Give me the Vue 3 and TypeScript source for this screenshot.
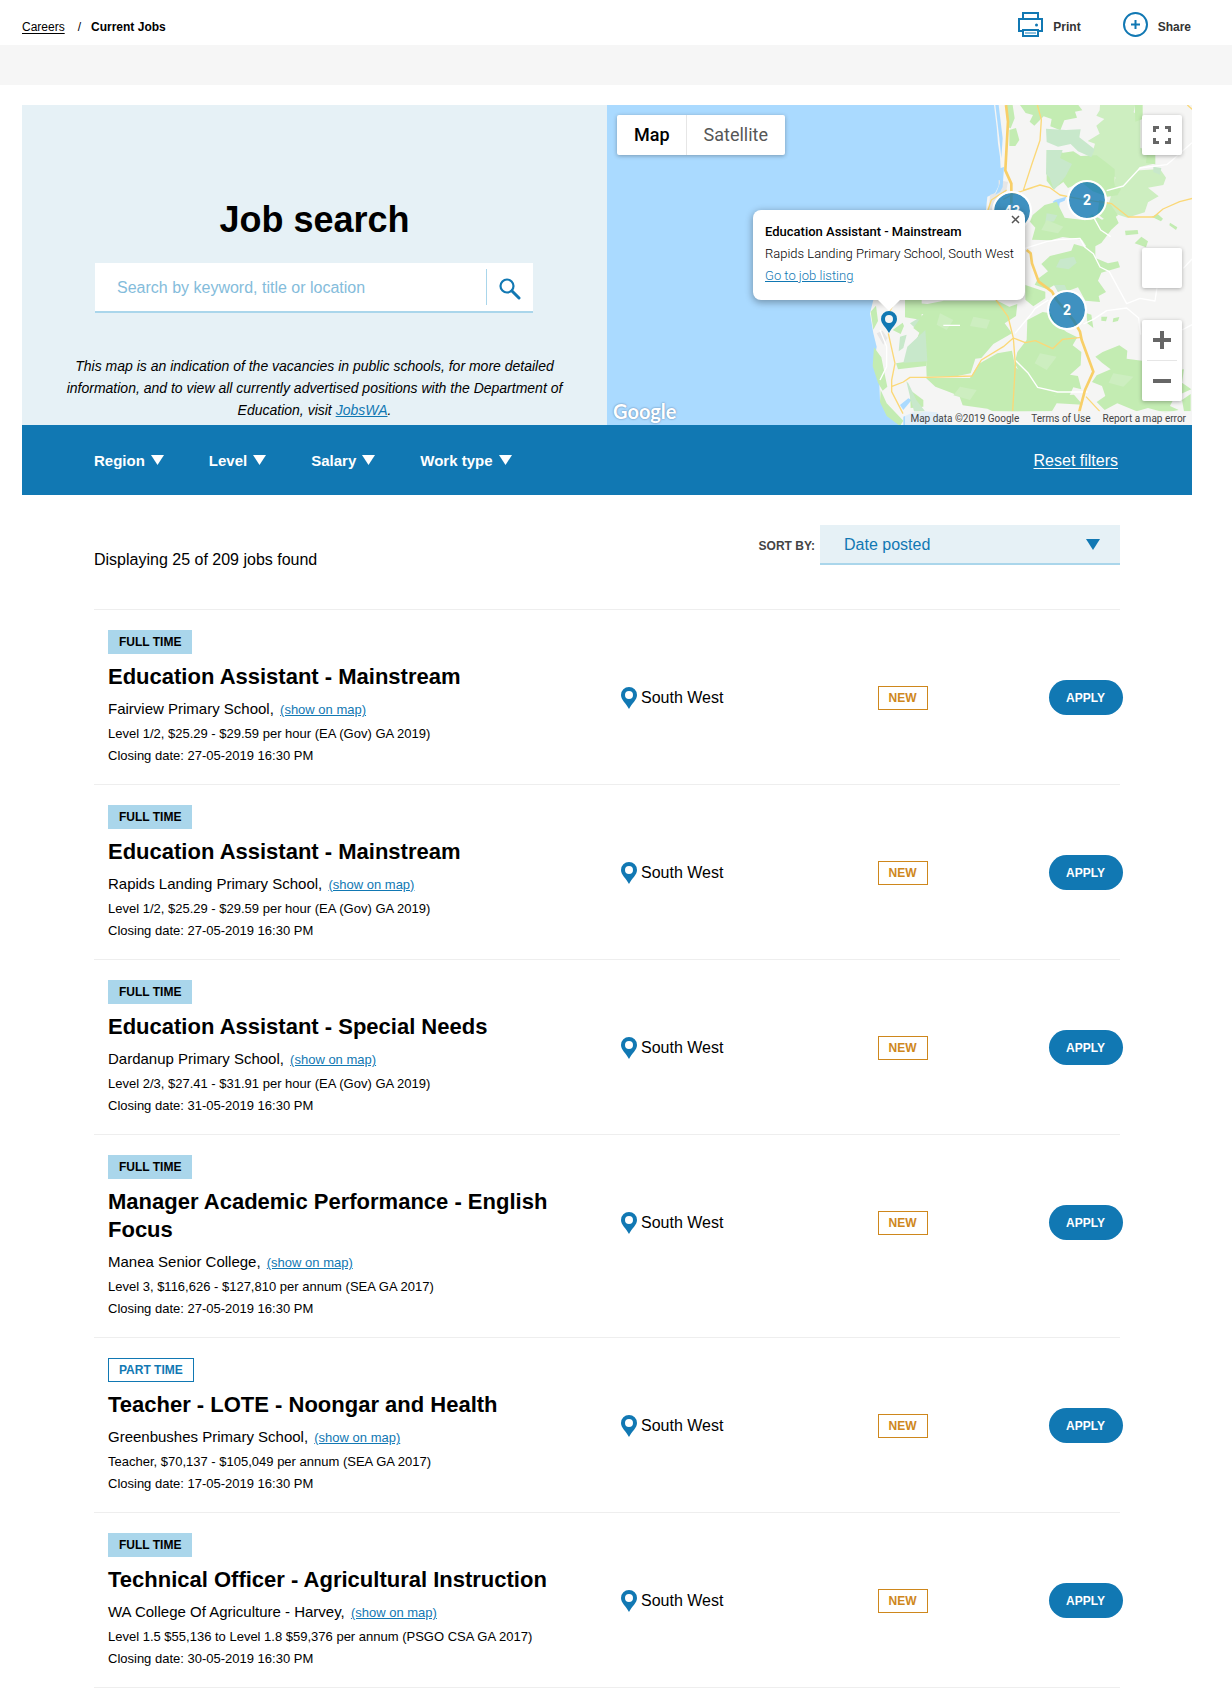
<script setup lang="ts">
import { ref } from 'vue'

interface Job {
  type: 'Full time' | 'Part time'
  title: string
  school: string
  salary: string
  closing: string
}

const filters: string[] = ['Region', 'Level', 'Salary', 'Work type']
const keyword = ref('')
const sort = ref('Date posted')

const jobs: Job[] = [
  { type: 'Full time', title: 'Education Assistant - Mainstream', school: 'Fairview Primary School,', salary: 'Level 1/2, $25.29 - $29.59 per hour (EA (Gov) GA 2019)', closing: '27-05-2019 16:30 PM' },
  { type: 'Full time', title: 'Education Assistant - Mainstream', school: 'Rapids Landing Primary School,', salary: 'Level 1/2, $25.29 - $29.59 per hour (EA (Gov) GA 2019)', closing: '27-05-2019 16:30 PM' },
  { type: 'Full time', title: 'Education Assistant - Special Needs', school: 'Dardanup Primary School,', salary: 'Level 2/3, $27.41 - $31.91 per hour (EA (Gov) GA 2019)', closing: '31-05-2019 16:30 PM' },
  { type: 'Full time', title: 'Manager Academic Performance - English Focus', school: 'Manea Senior College,', salary: 'Level 3, $116,626 - $127,810 per annum (SEA GA 2017)', closing: '27-05-2019 16:30 PM' },
  { type: 'Part time', title: 'Teacher - LOTE - Noongar and Health', school: 'Greenbushes Primary School,', salary: 'Teacher, $70,137 - $105,049 per annum (SEA GA 2017)', closing: '17-05-2019 16:30 PM' },
  { type: 'Full time', title: 'Technical Officer - Agricultural Instruction', school: 'WA College Of Agriculture - Harvey,', salary: 'Level 1.5 $55,136 to Level 1.8 $59,376 per annum (PSGO CSA GA 2017)', closing: '30-05-2019 16:30 PM' },
]
</script>

<template>
  <div class="page">
    <header class="top">
      <nav class="crumbs" aria-label="Breadcrumb">
        <a href="#careers">Careers</a><span class="slash">/</span><strong>Current Jobs</strong>
      </nav>
      <div class="tools">
        <button type="button" class="tool">
          <svg width="25" height="25" viewBox="0 0 25 25" fill="none" stroke="#1178b3" stroke-width="2">
            <path d="M5 6V1h15v5M5 19H1V7h23v12h-4" />
            <path d="M5 18h15v6H5z" />
            <path d="M7 21h11" stroke="#8fc1dd" />
            <circle cx="18.500" cy="13" r="1.500" fill="#1178b3" stroke="none" />
          </svg>
          <span>Print</span>
        </button>
        <button type="button" class="tool">
          <svg width="25" height="25" viewBox="0 0 25 25" fill="none" stroke="#1178b3" stroke-width="2">
            <circle cx="12.500" cy="12.500" r="11.500" />
            <path d="M12.500 8v9M8 12.500h9" />
          </svg>
          <span>Share</span>
        </button>
      </div>
    </header>
    <div class="band"></div>

    <main class="main">
      <div class="hero">
        <section class="search">
          <h1>Job search</h1>
          <form class="searchbox" @submit.prevent>
            <input v-model="keyword" type="text" aria-label="Search jobs" placeholder="Search by keyword, title or location" />
            <button type="submit" aria-label="Search">
              <svg width="22" height="22" viewBox="0 0 22 22" fill="none" stroke="#1178b3">
                <circle cx="8" cy="8" r="6.500" stroke-width="2.200" />
                <path d="M13 13l7 7" stroke-width="3" stroke-linecap="round" />
              </svg>
            </button>
          </form>
          <p>This map is an indication of the vacancies in public schools, for more detailed information, and to view all currently advertised positions with the Department of Education, visit <a href="#jobswa">JobsWA</a>.</p>
        </section>

        <section class="map" aria-label="Map of vacancies">
          <svg class="terrain" viewBox="0 0 585 320" preserveAspectRatio="xMinYMin slice" aria-hidden="true">
            <rect width="585" height="320" fill="#aadaff" />
            <g transform="translate(293 -5) scale(0.33333)">
              <path fill="#f5f5f4" d="M282 15L290 80 294 130 300 170 302 205 300 250 285 280 262 290 258 330-80 600-90 640-80 700-70 740-78 790-62 850-60 900-20 950 0 980H880V15Z" />
              <path fill="#e6e6e6" d="M270 285l28-10 4 50-36 8zM-70 700l18-8 14 22-12 20zM296 240l28 6-6 30-22 10z" />
              <path fill="#aadaff" d="M300 205l12-4-4 60-8 15-14 8 14-34zM286 15l10 0 12 100-4 60-6-60zM541 190l8 20-6 30-8 10zM465 300l34-10-5 12-15 6-5 45-10-5 4-30-10-12zM0 915l25-20 10 5-25 30zM10 950l40-18 60 5 40 38H10zM618 250l6 0-2 20-5 0z" />
              <path fill="#c3ecb2" d="M360 15H535l12 16-22 4 6 18-38 8-12 30-30-12 4-22-24-8-28 28-14-12 10-20-22-6zM328 90l20-6 10 36-12 18-18 0zM318 15h20l6 40-12 30-10-4z" />
              <path fill="#cdeec0" d="M600 15H705l-4 22 20 14 0 92 44 20-4 28-42 10-20 30-52 2-34-28-40-32 12-42-22-8 36-22-10-24 24-20-24-10 10-16zM650 215l130-8 18 26-8 22-46 8 32 26-32 18-10 30-52 16-62-20 20-70z" />
              <path fill="#c3ecb2" d="M440 150l50 8 30-4 22 14 48-2 30 22 24 20 0 50 20 8-12 20-30 4-44-16-34-28-40 18-14-18-30 22-20-26zM704 15l24 0 0 42-22 8zM740 165h26v28l-28-4zM598 300l30 8 26 38-30 20-32-24z" />
              <path fill="#c8e8cb" d="M438 86l60 4 44-2-4 24 46 36-10 24-40-18-22-22-38 8-34-14zM440 150l48 0-8 24 36 18-20 38-34 40-14-38-10-10zM80 640l6 70 50 4-48 66-42 0-16-22 30-60-30-28z" />
              <path fill="#c3ecb2" d="M398 345l36-30 36-10 24 48 62 8 20-18 30 16 38-16 12 26-22 20-30 40-38 20-20-30-58-8-36 10-56-2 10-36-16-18zM675 392l38-2 2 12-38 4zM704 430l20-20 20 14-6 18zM810 368l22 14-4 8-20-14zM755 350l18-8 16 14-6 8z" />
              <path fill="#c3ecb2" d="M450 468l64-16 8-20 34 10 8-18 22 8 0 42 38 16 30-6 6 18-56 16-10 24 24 34-22 12 4 18-44-4-22-40-38 14-34-20-20 12-38-14 10-18 30-22-20-22zM376 555l60 20 0 20-36 24-24-20z" />
              <path fill="#c8e8cb" d="M480 478l42-8 8 18-24 20-38-6zM462 555l32 0 8 18-28 4zM440 340l32 6-10 18-26 4zM760 200l24 4-4 20-20-8z" />
              <path fill="#c3ecb2" d="M18 606l64 6 50-10 160 0 36 18 24-8-4 36-34 22 22 30-56 32-36 42-18 2-14 44-50 10H80l-2-54-48-6 28-72-18-14 30-42-50 0z" />
              <path fill="#c3ecb2" d="M382 660l46-24 24 4 16 32 32 24 32 16-14 24 26 20-2 40-32 28 24 4 10 40-24-6-14 30-66-8-68-44-28-50 8-34 28-36z" />
              <path fill="#c3ecb2" d="M78 834h132l26-42 56-32 44-8 10 50 54 40 62 44 60-2 26 30-78-4-14 24-118 2-60-2-16-8-74-10-10-28-36-14-36-14z" />
              <path fill="#c3ecb2" d="M586 770l22-14 50-20 24 16-2 24 46 6 42 0 30 32 54-6-6 40 28 20-50 22-14 28 26 12-40 8-52-14-34 10-58-24-38 20-24-24 26-18-10-30-30-12 14-20 42-18-26-20zM740 740l36 16-20 20-24-14zM846 900l26-18v52l-20 0z" />
              <path fill="#c3ecb2" d="M-78 742l22 30 12 60 6 28-14 12-14-24-16-50zM-88 635l16-18 6 46-14 26zM15 600h50v60l-50-8zM-22 690l30-22 4 10-10 24zM-12 790l90-14 0 22-84 10zM-58 870l18 40 50 52-10 16-40-30-20-42zM560 640l14 4 6 40-18-14zM604 650l18 0-4 14-14-2zM640 655l18-4-4 12-16 4zM30 870l40 30 0 20-38 4z" />
              <path fill="#c8e8cb" d="M22 740l54-50 6 94-72 4zM0 710l20-6-10 40-14 10zM25 850l24 50 26 34-30 10-14-50-12-50z" />
              <path fill="#cdeec0" d="M120 640l40 20-20 30-30-16zM220 650l50 10-10 26-50-8zM420 760l50 10-30 40-36-20zM180 860l50 10-20 30-50-14zM440 360l50 20-16 20-50-10zM640 820l60 10-30 30-44-12z" />
              <g fill="none" stroke="#fff" stroke-width="4" stroke-linejoin="round">
                <path d="M375 445l65-20 36-6 64-4 14 26 26 20 20 40 28 14 52 96 40-16 45 8 6-40 30-20M550 672l30-14 40-26 60-8 36 30 6 50M620 272l50-14 50-54 80-10 20-16 56-50M345 700l50-60 10-14 40-26M345 780l40 40 28 42 60 14 90 0M580 350l22 40 30 20M130 676h50M850 505l26-28M846 690l30-16M-60 690l20 50 0 60-20 40" />
              </g>
              <g fill="none" stroke="#fbd878" stroke-width="4" stroke-linejoin="round">
                <path d="M412 15l12 44-4 62-24 70-26 80 50-16 30 8 30 22 70 14 85 12 50 40 76 0 28-24 50-22 46-12M288 600l36 50 16 64 6 80-8 140M340 714l36 14 30-6 52 24 30-28 56-6M340 714l-30 26-66 40-28 48-130 4H30L10 846l-36 14M-35 700l20 90-10 50v35l34 66M-22 618l-12 22M558 890l42 45M862 15l18 16M320 270l-46 30-10 30M400 262l-60 20-30 16" />
              </g>
              <g fill="none" stroke="#f8cf68" stroke-width="8" stroke-linejoin="round">
                <path d="M318 15l6 50-8 146 18 40 0 60M380 450l12 10 4 30 20 55 40 30 14 25 50 60 20 35 5 25 35 95-25 55-18 68" />
              </g>
            </g>
          </svg>

          <div class="maptype">
            <button type="button" class="active">Map</button>
            <button type="button">Satellite</button>
          </div>

          <span class="cluster c1">43</span>
          <span class="cluster c2">2</span>
          <span class="cluster c3">2</span>

          <svg class="marker" width="16" height="22" viewBox="0 0 16 22">
            <path fill="#1178b3" fill-rule="evenodd" d="M8 0a8 8 0 0 1 8 8c0 5-5 8-8 14C5 16 0 13 0 8a8 8 0 0 1 8-8zm0 4a4 4 0 1 0 0 8 4 4 0 0 0 0-8z" />
          </svg>

          <div class="info">
            <button type="button" class="close" aria-label="Close">
              <svg width="9" height="9" viewBox="0 0 9 9" stroke="#555" stroke-width="1.500"><path d="M1 1l7 7M8 1l-7 7" /></svg>
            </button>
            <strong>Education Assistant - Mainstream</strong>
            <span>Rapids Landing Primary School, South West</span>
            <a href="#listing">Go to job listing</a>
          </div>

          <div class="controls">
            <button type="button" class="ctl" aria-label="Toggle fullscreen">
              <svg width="18" height="18" viewBox="0 0 18 18" fill="none" stroke="#666" stroke-width="3"><path d="M1.500 6V1.500H6M12 1.500h4.500V6M16.500 12v4.500H12M6 16.500H1.500V12" /></svg>
            </button>
            <button type="button" class="ctl pegman" aria-label="Street View"></button>
            <div class="zoomer">
              <button type="button" aria-label="Zoom in">
                <svg width="18" height="18" viewBox="0 0 18 18" stroke="#666" stroke-width="4"><path d="M9 0v18M0 9h18" /></svg>
              </button>
              <hr />
              <button type="button" aria-label="Zoom out">
                <svg width="18" height="18" viewBox="0 0 18 18" stroke="#666" stroke-width="4"><path d="M0 9h18" /></svg>
              </button>
            </div>
          </div>

          <span class="brand">Google</span>
          <div class="legal">
            <span>Map data ©2019 Google</span>
            <a href="#terms">Terms of Use</a>
            <a href="#report">Report a map error</a>
          </div>
        </section>
      </div>

      <div class="filters">
        <button v-for="f in filters" :key="f" type="button" class="filter">
          {{ f }}
          <svg width="13" height="10" viewBox="0 0 13 10" fill="#fff"><path d="M0 0h13L6.500 10z" /></svg>
        </button>
        <a class="reset" href="#reset">Reset filters</a>
      </div>

      <div class="content">
        <div class="listhead">
          <p>Displaying 25 of 209 jobs found</p>
          <div class="sort">
            <label for="sort">SORT BY:</label>
            <div class="select">
              <select id="sort" v-model="sort">
                <option>Date posted</option>
                <option>Closing date</option>
              </select>
              <svg width="14" height="11" viewBox="0 0 14 11" fill="#1178b3"><path d="M0 0h14L7 11z" /></svg>
            </div>
          </div>
        </div>

        <ul class="jobs">
          <li v-for="(job, i) in jobs" :key="i" class="job">
            <div class="cell">
              <span class="tag" :class="{ outline: job.type === 'Part time' }">{{ job.type.toUpperCase() }}</span>
              <h2>{{ job.title }}</h2>
              <div class="school">{{ job.school }} <a href="#map">(show on map)</a></div>
              <div class="meta">{{ job.salary }}</div>
              <div class="meta">Closing date: {{ job.closing }}</div>
            </div>
            <div class="cell side">
              <svg width="16" height="22" viewBox="0 0 16 22">
                <path fill="#1178b3" fill-rule="evenodd" d="M8 0a8 8 0 0 1 8 8c0 5-5 8-8 14C5 16 0 13 0 8a8 8 0 0 1 8-8zm0 4a4 4 0 1 0 0 8 4 4 0 0 0 0-8z" />
              </svg>
              South West
            </div>
            <div class="cell side"><span class="tag new">NEW</span></div>
            <div class="cell side"><button type="button" class="apply">APPLY</button></div>
          </li>
        </ul>
      </div>
    </main>
  </div>
</template>

<style>
body {
  margin: 0;
  background: #fff;
}
</style>

<style scoped>
* {
  box-sizing: border-box;
}
.page {
  font-family: "Liberation Sans", Arial, sans-serif;
  color: #000;
  padding-bottom: 12px;
}
button {
  font: inherit;
  border: 0;
  padding: 0;
  background: none;
  cursor: pointer;
}
svg {
  display: block;
  flex: none;
}
a {
  color: #1178b3;
}
.top {
  display: flex;
  justify-content: space-between;
  height: 45px;
  padding: 0 41px 0 22px;
  font-size: 12px;
  line-height: 20px;
}
.crumbs {
  padding-top: 17px;
}
.crumbs a {
  color: #000;
  text-underline-offset: 2px;
}
.slash {
  margin: 0 10px 0 13px;
}
.tools {
  display: flex;
  align-items: flex-start;
  gap: 42px;
  padding-top: 12px;
}
.tool {
  display: flex;
  align-items: flex-end;
  gap: 10px;
  font-weight: bold;
  color: #333;
}
.band {
  height: 40px;
  background: #f6f6f6;
}
.main {
  padding: 20px 40px 0 22px;
}
.hero {
  display: grid;
  grid-template-columns: 1fr 1fr;
}
.search {
  background: #e6f1f6;
  padding: 95px 40px 4px;
  text-align: center;
}
h1 {
  margin: 0 0 23px;
  font-size: 36px;
  line-height: 40px;
}
.searchbox {
  display: flex;
  align-items: center;
  height: 50px;
  margin: 0 34px 42px 33px;
  background: #fff;
  border-bottom: 2px solid #aad6eb;
}
.searchbox input {
  flex: 1;
  min-width: 0;
  height: 40px;
  padding: 2px 22px 0;
  border: 0;
  outline: 0;
  background: none;
  font: 16px "Liberation Sans", Arial, sans-serif;
}
.searchbox input::placeholder {
  color: #84bcdb;
  opacity: 1;
}
.searchbox button {
  display: flex;
  align-items: center;
  width: 47px;
  height: 36px;
  padding-left: 12px;
  padding-top: 4px;
  border-left: 1px solid #aad6eb;
}
.search p {
  margin: 0;
  font-size: 14px;
  line-height: 22px;
  font-style: italic;
}
.map {
  position: relative;
  overflow: hidden;
  background: #aadaff;
  font-family: Roboto, sans-serif;
}
.terrain {
  position: absolute;
  inset: 0;
  width: 100%;
  height: 100%;
}
.maptype {
  position: absolute;
  top: 10px;
  left: 10px;
  display: flex;
  height: 40px;
  background: #fff;
  border-radius: 2px;
  box-shadow: 0 1px 4px rgba(0, 0, 0, 0.3);
}
.maptype button {
  padding: 0 17px 2px;
  font-size: 18px;
  color: #565656;
}
.maptype button.active {
  padding-right: 16px;
  font-weight: 500;
  color: #000;
  border-right: 1px solid #e6e6e6;
}
.cluster {
  position: absolute;
  width: 40px;
  height: 40px;
  border: 2px solid #fff;
  border-radius: 50%;
  background: rgba(17, 120, 179, 0.8);
  background-clip: padding-box;
  color: #fff;
  font-size: 14px;
  font-weight: bold;
  line-height: 36px;
  text-align: center;
}
.c1 {
  left: 385px;
  top: 86px;
}
.c2 {
  left: 460px;
  top: 75px;
}
.c3 {
  left: 440px;
  top: 185px;
}
.marker {
  position: absolute;
  left: 274px;
  top: 206px;
}
.info {
  position: absolute;
  left: 146px;
  top: 105px;
  display: flex;
  flex-direction: column;
  align-items: flex-start;
  width: 272px;
  height: 90px;
  padding: 11px 12px;
  border-radius: 8px;
  background: #fff;
  box-shadow: 0 2px 7px 1px rgba(0, 0, 0, 0.3);
  font-size: 13px;
  line-height: 22px;
  white-space: nowrap;
}
.info::after {
  content: "";
  position: absolute;
  left: 125px;
  top: 90px;
  border: 11px solid transparent;
  border-top-color: #fff;
  border-bottom: 0;
}
.info strong {
  font-weight: 500;
}
.info span,
.info a {
  font-weight: 300;
}
.close {
  position: absolute;
  top: 5px;
  right: 5px;
}
.controls {
  position: absolute;
  top: 10px;
  right: 10px;
  display: flex;
  flex-direction: column;
}
.ctl,
.zoomer {
  width: 40px;
  background: #fff;
  border-radius: 2px;
  box-shadow: 0 1px 4px rgba(0, 0, 0, 0.3);
}
.ctl {
  display: grid;
  place-items: center;
  height: 40px;
}
.pegman {
  margin: 93px 0 32px;
}
.zoomer button {
  display: grid;
  place-items: center;
  width: 40px;
  height: 40px;
}
.zoomer hr {
  height: 1px;
  margin: 0 5px;
  border: 0;
  background: #e6e6e6;
}
.brand {
  position: absolute;
  left: 6px;
  bottom: 1px;
  font: bold 20px/26px Lato, sans-serif;
  color: #fff;
  text-shadow: 0 0 2px rgba(60, 90, 130, 0.8);
}
.legal {
  position: absolute;
  right: 0;
  bottom: 0;
  display: flex;
  gap: 12px;
  padding: 2px 6px 0 5px;
  background: rgba(245, 245, 245, 0.7);
  font-size: 10px;
  line-height: 12px;
  color: #444;
}
.legal a {
  color: #444;
  text-decoration: none;
}
.filters {
  display: flex;
  align-items: center;
  gap: 45px;
  height: 70px;
  padding: 0 74px 0 72px;
  background: #1178b3;
  color: #fff;
}
.filter {
  display: flex;
  align-items: center;
  gap: 6px;
  color: #fff;
  font-size: 15px;
  font-weight: bold;
}
.reset {
  margin-left: auto;
  padding-top: 2px;
  color: #fff;
  font-size: 16px;
  text-underline-offset: 2px;
}
.content {
  padding: 30px 72px 0;
}
.listhead {
  display: flex;
  justify-content: space-between;
  align-items: flex-start;
  margin-bottom: 39px;
}
.listhead p {
  margin: 25px 0 0;
  font-size: 16px;
  line-height: 20px;
}
.sort {
  display: flex;
  align-items: center;
  gap: 5px;
}
.sort label {
  padding-top: 2px;
  font-size: 12px;
  font-weight: bold;
  color: #444;
}
.select {
  position: relative;
  width: 300px;
}
.select select {
  display: block;
  appearance: none;
  width: 100%;
  height: 40px;
  padding: 0 24px;
  border: 0;
  border-bottom: 2px solid #aad6eb;
  border-radius: 0;
  background: #e6f1f6;
  color: #1178b3;
  font: 16px "Liberation Sans", Arial, sans-serif;
}
.select svg {
  position: absolute;
  right: 20px;
  top: 14px;
  pointer-events: none;
}
.jobs {
  margin: 0;
  padding: 0;
  list-style: none;
  border-bottom: 1px solid #eee;
}
.job {
  display: grid;
  grid-template-columns: 6fr 3fr 2fr 1fr;
  align-items: start;
  padding: 20px 0 17px;
  border-top: 1px solid #eee;
}
.cell {
  min-width: 0;
  padding-left: 14px;
}
.cell:first-child {
  padding-right: 14px;
}
.tag {
  display: block;
  width: max-content;
  height: 24px;
  padding: 0 10px;
  border: 1px solid #aad6eb;
  background: #aad6eb;
  font-size: 12px;
  font-weight: bold;
  line-height: 23px;
}
.tag.outline {
  border-color: #1178b3;
  background: #fff;
  color: #1178b3;
}
.tag.new {
  border-color: #ce871c;
  background: #fff;
  color: #ce871c;
}
h2 {
  margin: 9px 0 6px;
  font-size: 22px;
  line-height: 28px;
}
.school {
  height: 26px;
  font-size: 15px;
  line-height: 24px;
}
.school a {
  margin-left: 2px;
  font-size: 13px;
}
.meta {
  font-size: 13px;
  line-height: 22px;
}
.side {
  display: flex;
  align-items: center;
  gap: 4px;
  height: 135px;
  font-size: 16px;
}
.apply {
  flex: none;
  width: 74px;
  height: 35px;
  border-radius: 18px;
  background: #1178b3;
  color: #fff;
  font-size: 12px;
  font-weight: bold;
}
</style>
